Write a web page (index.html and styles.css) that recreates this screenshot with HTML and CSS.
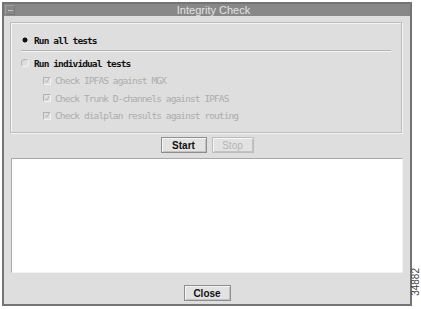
FILE: index.html
```html
<!DOCTYPE html>
<html lang="en">
<head>
  <meta charset="UTF-8">
  <meta name="viewport" content="width=device-width, initial-scale=1.0">
  <title>Integrity Check</title>
  <link rel="stylesheet" href="styles.css">
</head>
<body>
  <div class="window">
    <div class="titlebar">
      <span class="menu-btn"></span>
      <span class="title">Integrity Check</span>
    </div>

    <div class="content">
      <div class="group">
        <div class="radio-row">
          <span class="radio checked"></span>Run all tests
        </div>
        <div class="rule"></div>
        <div class="radio-row">
          <span class="radio"></span>Run individual tests
        </div>
        <div class="checks">
          <div class="check-row">
            <span class="check"><svg width="7" height="7" viewBox="0 0 7 7"><path d="M1 3.5 L3 5.5 L6 1" fill="none" stroke="#a9a9a9" stroke-width="1"/></svg></span>Check IPFAS against MGX
          </div>
          <div class="check-row">
            <span class="check"><svg width="7" height="7" viewBox="0 0 7 7"><path d="M1 3.5 L3 5.5 L6 1" fill="none" stroke="#a9a9a9" stroke-width="1"/></svg></span>Check Trunk D-channels against IPFAS
          </div>
          <div class="check-row">
            <span class="check"><svg width="7" height="7" viewBox="0 0 7 7"><path d="M1 3.5 L3 5.5 L6 1" fill="none" stroke="#a9a9a9" stroke-width="1"/></svg></span>Check dialplan results against routing
          </div>
        </div>
      </div>

      <div class="actions">
        <button class="btn btn-start">Start</button>
        <button class="btn btn-stop" disabled>Stop</button>
      </div>

      <div class="output"></div>

      <div class="footer">
        <button class="btn btn-close">Close</button>
      </div>
    </div>
  </div>

  <div class="fig-num">34882</div>
</body>
</html>
```

FILE: styles.css
```css
* {
  box-sizing: border-box;
}

body {
  margin: 0;
  padding: 0;
  background-color: #fff;
  font-family: "Liberation Sans", Arial, sans-serif;
  width: 421px;
  height: 309px;
  overflow: hidden;
}

.window {
  margin: 2px 0 0 2px;
  width: 410px;
  height: 304px;
  border: 2px solid #747474;
  background-color: #dedede;
  display: flex;
  flex-direction: column;
}

.titlebar {
  height: 12px;
  background-color: #888;
  display: flex;
  align-items: center;
}

.menu-btn {
  width: 10px;
  height: 10px;
  margin-left: 1px;
  border: 1px solid #9e9e9e;
  border-right-color: #777;
  border-bottom-color: #777;
  display: flex;
  align-items: center;
  justify-content: center;
}

.menu-btn::after {
  content: "";
  width: 5px;
  height: 1px;
  background-color: #c4c4c4;
}

.title {
  flex: 1;
  text-align: center;
  color: #e4e4e4;
  font-size: 11px;
  line-height: 12px;
  padding-left: 2px;
}

.content {
  flex: 1;
  display: flex;
  flex-direction: column;
  padding: 6px 6px 0 6px;
}

.group {
  height: 111px;
  border: 1px solid #bcbcbc;
  box-shadow: inset 1px 1px 0 #f4f4f4, 1px 1px 0 #f4f4f4;
  padding: 10px 10px 0 10px;
  margin-right: 2px;
}

.radio-row {
  height: 14px;
  display: flex;
  align-items: center;
  font-family: "DejaVu Sans Mono", "Liberation Mono", monospace;
  font-weight: bold;
  font-size: 9.5px;
  letter-spacing: -0.9px;
  color: #111;
}

.radio {
  width: 8px;
  height: 8px;
  margin-right: 5px;
  border-radius: 50%;
  border: 1px solid #b4b4b4;
  border-right-color: #f6f6f6;
  border-bottom-color: #f6f6f6;
}

.radio.checked {
  border: none;
  background: radial-gradient(circle, #111 0, #111 2.2px, transparent 2.8px);
}

.rule {
  height: 2px;
  margin: 3px 0 4px 0;
  border-top: 1px solid #b4b4b4;
  border-bottom: 1px solid #f4f4f4;
}

.checks {
  margin-top: 2px;
  padding-left: 22px;
}

.check-row {
  height: 17.5px;
  display: flex;
  align-items: center;
  font-family: "DejaVu Sans Mono", "Liberation Mono", monospace;
  font-size: 9.5px;
  letter-spacing: -0.9px;
  color: #acacac;
}

.check {
  width: 8px;
  height: 8px;
  margin-right: 4px;
  border: 1px solid #b2b2b2;
  border-right-color: #f2f2f2;
  border-bottom-color: #f2f2f2;
  display: flex;
  align-items: center;
  justify-content: center;
}

.check svg {
  display: block;
}

.actions {
  margin-top: 4px;
  height: 16px;
  display: flex;
  justify-content: center;
  gap: 5px;
}

.btn {
  height: 16px;
  padding: 0;
  font-family: "Liberation Sans", Arial, sans-serif;
  font-weight: bold;
  font-size: 10px;
  color: #111;
  background-color: #e2e2e2;
  border: 1px solid #8e8e8e;
  box-shadow: inset 1px 1px 0 #f6f6f6, inset -1px -1px 0 #c2c2c2;
}

.btn-start {
  width: 46px;
}

.btn-stop {
  width: 42px;
  color: #b4b4b4;
  font-weight: normal;
  border-color: #bcbcbc;
}

.btn-close {
  width: 47px;
}

.output {
  margin: 5px 1px 0 1px;
  height: 115px;
  background-color: #fff;
  border: 1px solid #a8a8a8;
  border-right-color: #f2f2f2;
  border-bottom-color: #f2f2f2;
}

.footer {
  margin-top: 12px;
  display: flex;
  justify-content: center;
}

.fig-num {
  position: absolute;
  left: 412px;
  top: 268px;
  writing-mode: vertical-rl;
  transform: rotate(180deg);
  font-family: "Liberation Sans", Arial, sans-serif;
  font-size: 10px;
  line-height: 8px;
  color: #444;
}
```
